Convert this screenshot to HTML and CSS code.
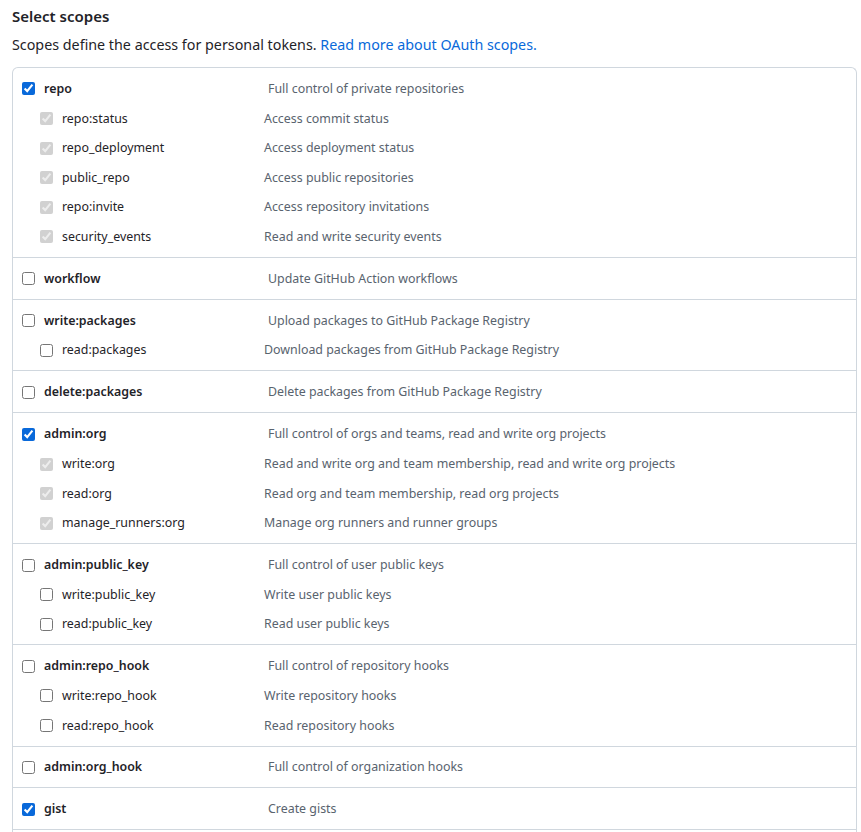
FILE: index.html
```html
<!DOCTYPE html>
<html lang="en">
<head>
<meta charset="utf-8">
<title>Select scopes</title>
<link rel="stylesheet" href="styles.css">
</head>
<body>
<div class="page">
  <h2 class="title">Select scopes</h2>
  <p class="intro">Scopes define the access for personal tokens. <a href="#">Read more about OAuth scopes.</a></p>
  <div class="scopes">
    <div class="group">
      <label class="row parent"><input type="checkbox" checked><span class="name">repo</span><span class="text">Full control of private repositories</span></label>
      <label class="row child"><input type="checkbox" checked disabled><span class="name">repo:status</span><span class="text">Access commit status</span></label>
      <label class="row child"><input type="checkbox" checked disabled><span class="name">repo_deployment</span><span class="text">Access deployment status</span></label>
      <label class="row child"><input type="checkbox" checked disabled><span class="name">public_repo</span><span class="text">Access public repositories</span></label>
      <label class="row child"><input type="checkbox" checked disabled><span class="name">repo:invite</span><span class="text">Access repository invitations</span></label>
      <label class="row child"><input type="checkbox" checked disabled><span class="name">security_events</span><span class="text">Read and write security events</span></label>
    </div>
    <div class="group">
      <label class="row parent"><input type="checkbox"><span class="name">workflow</span><span class="text">Update GitHub Action workflows</span></label>
    </div>
    <div class="group">
      <label class="row parent"><input type="checkbox"><span class="name">write:packages</span><span class="text">Upload packages to GitHub Package Registry</span></label>
      <label class="row child"><input type="checkbox"><span class="name">read:packages</span><span class="text">Download packages from GitHub Package Registry</span></label>
    </div>
    <div class="group">
      <label class="row parent"><input type="checkbox"><span class="name">delete:packages</span><span class="text">Delete packages from GitHub Package Registry</span></label>
    </div>
    <div class="group">
      <label class="row parent"><input type="checkbox" checked><span class="name">admin:org</span><span class="text">Full control of orgs and teams, read and write org projects</span></label>
      <label class="row child"><input type="checkbox" checked disabled><span class="name">write:org</span><span class="text">Read and write org and team membership, read and write org projects</span></label>
      <label class="row child"><input type="checkbox" checked disabled><span class="name">read:org</span><span class="text">Read org and team membership, read org projects</span></label>
      <label class="row child"><input type="checkbox" checked disabled><span class="name">manage_runners:org</span><span class="text">Manage org runners and runner groups</span></label>
    </div>
    <div class="group">
      <label class="row parent"><input type="checkbox"><span class="name">admin:public_key</span><span class="text">Full control of user public keys</span></label>
      <label class="row child"><input type="checkbox"><span class="name">write:public_key</span><span class="text">Write user public keys</span></label>
      <label class="row child"><input type="checkbox"><span class="name">read:public_key</span><span class="text">Read user public keys</span></label>
    </div>
    <div class="group">
      <label class="row parent"><input type="checkbox"><span class="name">admin:repo_hook</span><span class="text">Full control of repository hooks</span></label>
      <label class="row child"><input type="checkbox"><span class="name">write:repo_hook</span><span class="text">Write repository hooks</span></label>
      <label class="row child"><input type="checkbox"><span class="name">read:repo_hook</span><span class="text">Read repository hooks</span></label>
    </div>
    <div class="group">
      <label class="row parent"><input type="checkbox"><span class="name">admin:org_hook</span><span class="text">Full control of organization hooks</span></label>
    </div>
    <div class="group last">
      <label class="row parent"><input type="checkbox" checked><span class="name">gist</span><span class="text">Create gists</span></label>
    </div>
  </div>
</div>
</body>
</html>
```

FILE: styles.css
```css
html, body {
  margin: 0;
  padding: 0;
  background: #ffffff;
}

.page {
  padding: 4px 0 0 12px;
  width: 845px;
  font-family: "Noto Sans", "DejaVu Sans", sans-serif;
  color: #1f2328;
}

.title {
  margin: 0;
  font-size: 15px;
  font-weight: 600;
  line-height: 24px;
}

.intro {
  margin: 6px 0 12px;
  font-size: 14.3px;
  line-height: 21px;
}

.intro a {
  color: #0969da;
  text-decoration: none;
}

.scopes {
  border: 1px solid #d0d7de;
  border-bottom: 0;
  border-radius: 6px 6px 0 0;
  padding-bottom: 2px;
}

.group {
  padding: 6.2px 0 5.2px;
}

.group + .group {
  border-top: 1px solid #d0d7de;
}

.group.last {
  border-bottom: 1px solid #d0d7de;
}

.row {
  display: flex;
  align-items: center;
  height: 29.6px;
  font-size: 12.4px;
  line-height: 18px;
  white-space: nowrap;
}

.row input {
  width: 13px;
  height: 13px;
  margin: 0;
  flex: none;
  accent-color: #0969da;
}

.parent {
  padding-left: 9px;
}

.child {
  padding-left: 27px;
}

.name {
  margin-left: 9px;
  flex: none;
}

.parent .name {
  width: 224px;
  font-weight: 600;
}

.child .name {
  width: 202px;
}

.text {
  color: #59636e;
}
```
